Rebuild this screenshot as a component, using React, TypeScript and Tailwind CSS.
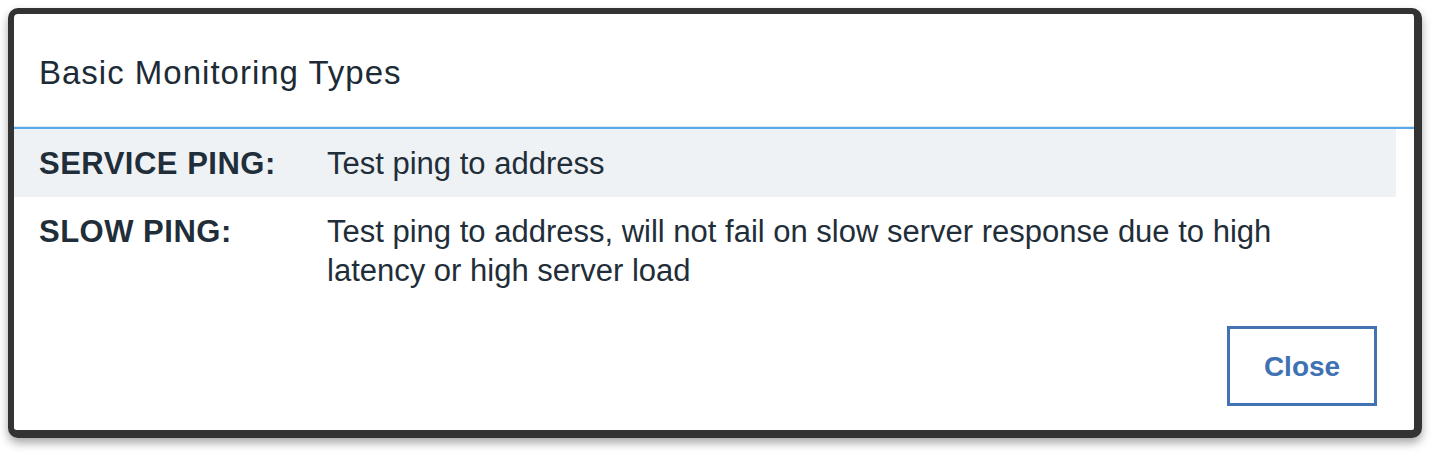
import React from "react";

export default function App() {
  return (
    <div className="w-[1438px] h-[454px] bg-white pt-[8px] pl-[8px]" style={{ fontFamily: '"Liberation Sans", Arial, sans-serif' }}>
      <div className="w-[1414px] h-[430px] bg-white rounded-[10px] border-[#333333] border-t-[6px] border-l-[6px] border-r-[8px] border-b-[8px] shadow-[0_5px_10px_rgba(0,0,0,0.35)] flex flex-col overflow-hidden">
        <div className="h-[112px] flex items-center pl-[25px] pt-[4px]">
          <h1 className="text-[33px] leading-none text-[#1c2b36] tracking-[1px]">Basic Monitoring Types</h1>
        </div>
        <div className="h-[1px] bg-[#dfe7ee]" />
        <div className="h-[2px] bg-[#5aa8ee]" />
        <div className="mr-[18px] text-[31px] leading-[39px] text-[#1f2e39]">
          <div className="flex bg-[#eef2f5] pt-[15px] pb-[14px]">
            <div className="w-[313px] pl-[25px] shrink-0 font-bold tracking-[0.5px]">SERVICE PING:</div>
            <div className="flex-1 pr-[25px]">Test ping to address</div>
          </div>
          <div className="flex pt-[15px] pb-[14px]">
            <div className="w-[313px] pl-[25px] shrink-0 font-bold tracking-[0.5px]">SLOW PING:</div>
            <div className="flex-1 pr-[25px]">
              Test ping to address, will not fail on slow server response due to high
              <br />
              latency or high server load
            </div>
          </div>
        </div>
        <div className="flex-1 flex items-start justify-end pt-[22px] pr-[37px]">
          <button className="w-[150px] h-[80px] border-[3px] border-[#4272b2] text-[#3f71b3] text-[28px] font-bold bg-white pt-[2px]">
            Close
          </button>
        </div>
      </div>
    </div>
  );
}
